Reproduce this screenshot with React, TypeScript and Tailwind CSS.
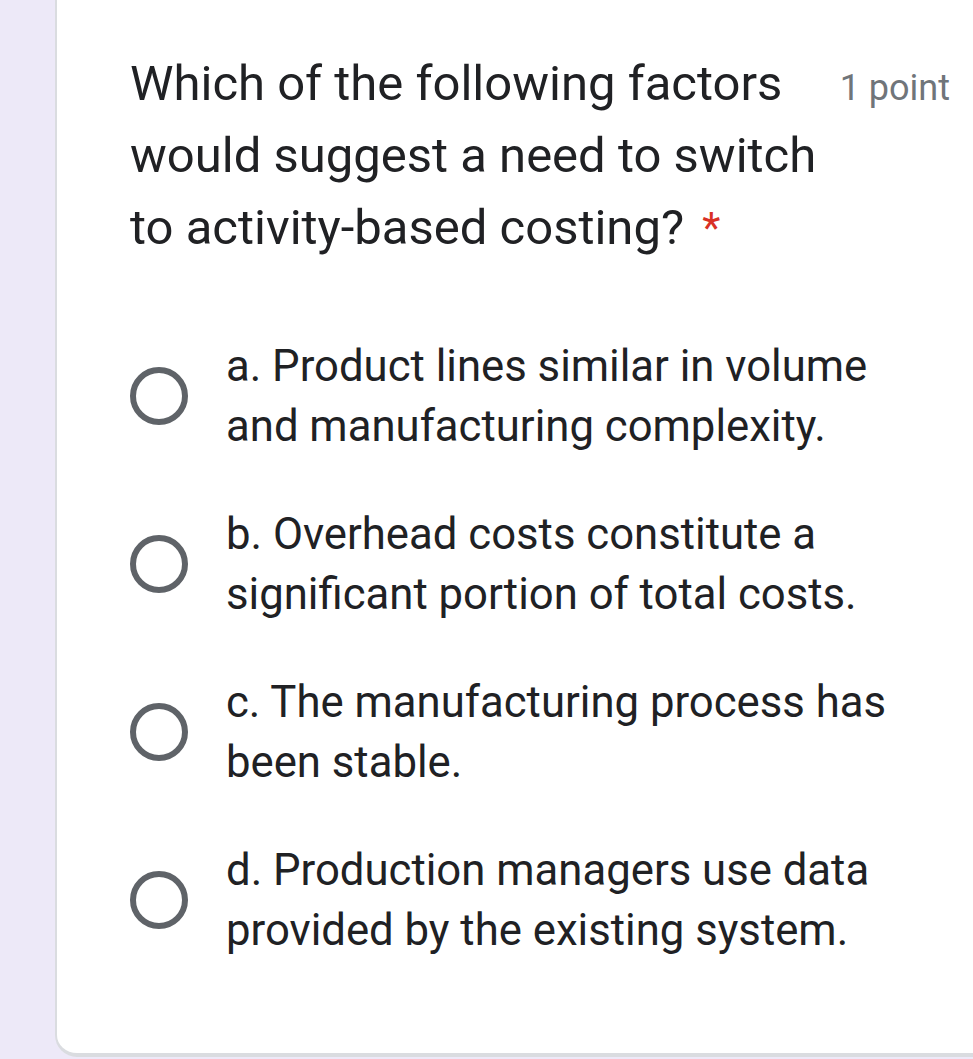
import React from 'react';

const options = [
  ['a. Product lines similar in volume', 'and manufacturing complexity.'],
  ['b. Overhead costs constitute a', 'significant portion of total costs.'],
  ['c. The manufacturing process has', 'been stable.'],
  ['d. Production managers use data', 'provided by the existing system.'],
];

function Radio() {
  return (
    <div className="w-[58px] h-[58px] rounded-full border-[6px] border-[#5f6368] shrink-0" />
  );
}

export default function App() {
  return (
    <div className="flex w-[973px] h-[1059px] bg-[#ede9f8] overflow-hidden" style={{ fontFamily: 'Roboto, sans-serif' }}>
      <div className="w-[55px] shrink-0" />
      <div className="flex-1 h-[1057px] bg-white border-l-2 border-b-[4px] border-[#dadce0] rounded-bl-[22px] -mr-[20px]">
        <div className="flex items-start pl-[73px] pt-[48px]">
          <div className="w-[700px] shrink-0 text-[49px] leading-[72px] text-[#202124]">
            Which of the following factors would suggest a need to switch to activity-based costing?{' '}
            <span className="ml-[6px] text-[#d93025] text-[42px] align-top">*</span>
          </div>
          <div className="ml-auto pr-[43px] pt-[10px] whitespace-nowrap text-[36px] leading-[60px] text-[#70757a]">1 point</div>
        </div>
        <div className="flex flex-col gap-[48px] pt-[72px] pl-[73px]">
          {options.map((o) => (
            <div key={o[0]} className="flex items-center">
              <Radio />
              <div className="ml-[38px] text-[43.7px] leading-[60px] text-[#202124]">
                <div>{o[0]}</div>
                <div>{o[1]}</div>
              </div>
            </div>
          ))}
        </div>
      </div>
    </div>
  );
}
